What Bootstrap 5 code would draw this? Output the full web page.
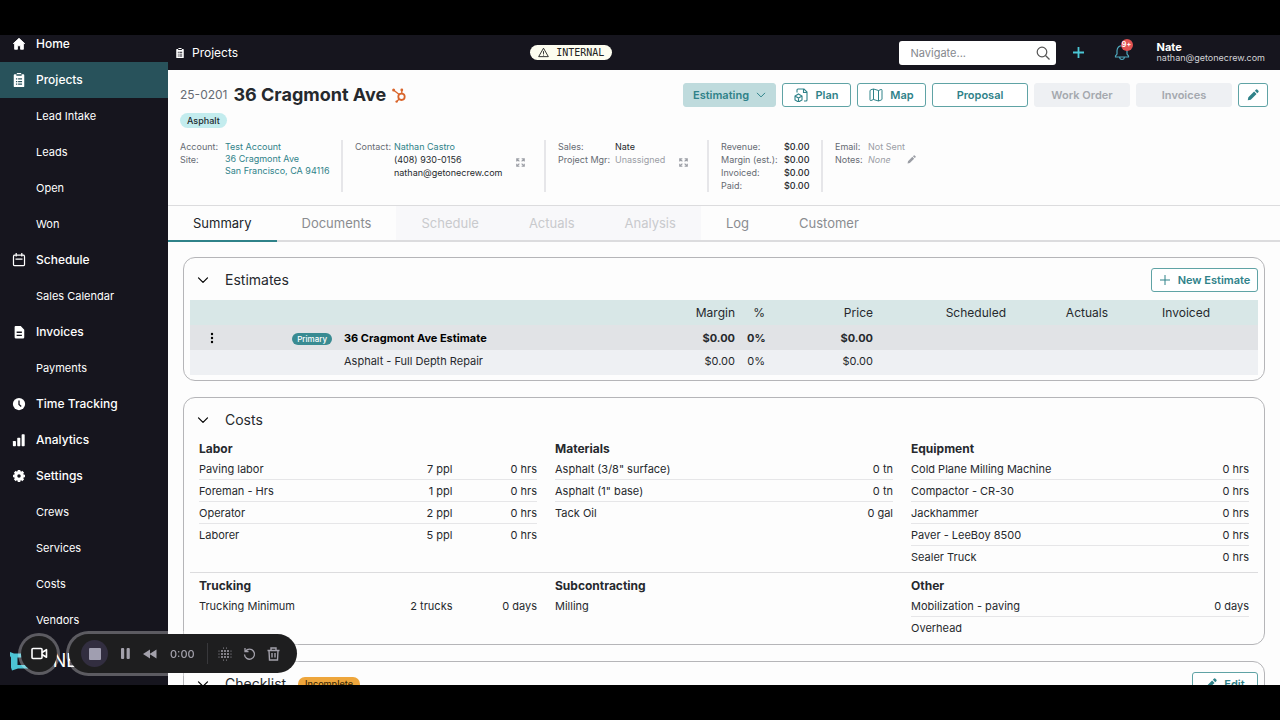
<!DOCTYPE html>
<html lang="en">
<head>
<meta charset="utf-8">
<meta name="viewport" content="width=device-width, initial-scale=1">
<title>36 Cragmont Ave - Projects</title>
<link href="https://cdn.jsdelivr.net/npm/bootstrap@5.3.0/dist/css/bootstrap.min.css" rel="stylesheet">
<style>
:root{--teal:#2f8289;--ink:#16151e}
body{background:#000;color:#26292d;font:11px/14px Inter,"Liberation Sans",sans-serif;padding:35px 0}
svg{display:block;flex:none}
a{text-decoration:none;color:var(--teal)}
button{font-family:inherit}
.app-shell{height:calc(100vh - 70px)}
.side-nav{width:168px;background:var(--ink)}
.side-nav ul{margin-top:-9px}
.side-link{height:36px;color:#fff;font-size:12px;font-weight:500;padding:0 0 1px 12px;gap:10px}
.side-link svg{width:14px;height:14px}
.side-link.sub{font-size:11px;font-weight:400;padding-left:36px}
.side-link.active{background:#28525b}
.brand-logo{left:8px;bottom:12px;gap:11px;color:#fff;font-size:18px;line-height:24px}
.main-pane{background:#fdfdfd}
.top-bar{height:35px;background:var(--ink);color:#fff;padding:0 15px 0 7px}
.crumb{font-size:12px;gap:7px;width:69px}
.env-tag{background:#fdfdf0;color:#222;font:10px/15px "DejaVu Sans Mono",monospace;gap:7px;padding:0 8px}
.search-box{width:157px;height:24px}
.search-box input{font-size:11px;height:24px;padding:0 28px 0 12px;border-radius:3px}
.search-box input::placeholder{color:#85888e}
.search-box svg{right:6px;top:5px}
.bell{margin:0 27px 0 29px}
.bell-count{left:7px;top:-5px;width:12px;height:12px;background:#e05252;font-size:7px;line-height:12px}
.user-name{line-height:11px}
.user-mail{font-size:9px;line-height:10px;color:#d2d2d6}
.proj-head{padding:13px 12px 13px}
.proj-no{font-size:12px;color:#666b73}
.proj-title{font-size:18px;line-height:24px;font-weight:700}
.name-row,.act-row{gap:6px}
.act{height:24px;font-size:11px;line-height:14px;font-weight:600;border:1px solid #5fa3a5;border-radius:3px;color:var(--teal);background:#fff;padding:0;gap:7px}
.act.w{width:96px}
.act.icon-act{width:69px}
.act.state{width:93px;background:#bfdbdd;border-color:#bfdbdd}
.act:disabled{background:#eef0f3;border-color:#eef0f3;color:#a4a8ae}
.act.sq{width:30px}
.act.add-act{width:107px}
.act.edit-act{width:66px}
.tag-row{margin-top:6px}
.tag-pill{background:#c3ecee;color:#1d2a2e;font-size:9px;line-height:15px;font-weight:500;padding:0 7px}
.facts{display:grid;grid-template-columns:163px 203px 163px 114px 1fr;margin-top:12px;font-size:9px;line-height:13px}
.facts>div{min-height:52px;padding-left:12px}
.facts>div:first-child{padding-left:0}
.facts>div:not(:last-child){border-right:2px solid #e6e6e9}
.facts>.with-grow{padding-right:19px}
.facts dl{display:grid;margin:0;align-content:start;grid-template-columns:45px 1fr}
.facts dl.k-contact{grid-template-columns:39px 1fr}
.facts dl.k-sales{grid-template-columns:57px 1fr}
.facts dl.k-money{grid-template-columns:63px 1fr}
.facts dl.k-notes{grid-template-columns:33px 1fr}
.facts dt{font-weight:400;color:#666b73}
.facts dd{margin:0}
.k-money dd{font-weight:500}
.facts address{line-height:12px;margin:0}
.facts .soft,.soft{color:#9b9ea5}
.tab-row{border-top:1px solid #dcdcde;border-bottom:2px solid #dcdcde}
.tab-row button{border:0;background:none;height:34px;padding:0 25px;font-size:13px;color:#8a8c90;position:relative}
.tab-row button.active{color:#212529}
.tab-row button.active::after{content:"";position:absolute;left:0;right:0;bottom:-2px;height:2px;background:var(--teal)}
.tab-row button:disabled{background:#f8f8fa;color:#c9cacd}
.panels{padding:15px 15px 0;gap:16px}
.panel-box{border:1px solid #b5b5b8;border-radius:12px;padding:0 6px 5px;background:#fdfdfd;flex:none}
.panel-head{height:42px;padding-top:2px;gap:12px}
.panel-head h2{font-size:14px;line-height:20px;margin:0;font-weight:400}
.fold{border:0;background:none;padding:0 4px 0 7px}
.est{width:100%;table-layout:fixed;border-collapse:collapse}
.est th,.est td{height:25px;padding:0 6px;text-align:right;white-space:nowrap}
.est th{font-size:12px;font-weight:400}
.est .l{text-align:left}
.est thead tr{background:#d8e7e7}
.est .main-row{background:#e1e3e6;font-weight:700}
.est .line-row{background:#eef0f3}
.est .line-row td{padding-bottom:3px}
.est .c-menu{width:44px}.est .c-tag{width:104px}.est .c-margin{width:98px}.est .c-pct{width:30px}.est .c-price{width:108px}.est .c-sched{width:133px}.est .c-act{width:102px}.est .c-end{width:42px}
.prim{background:#398b92;color:#fff;font-size:8px;line-height:12px;font-weight:500;padding:0 5px;display:inline-block;vertical-align:middle}
.cost-grid{display:grid;grid-template-columns:repeat(3,1fr)}
.cost-grid+.cost-grid{border-top:1px solid #dcdcde;padding-top:4px;margin-top:4px}
.cost-grid section{padding:0 9px}
.cost-grid h3{font-size:12px;line-height:18px;margin:0;font-weight:700}
.cost-grid table{width:100%;table-layout:fixed;border-collapse:separate;border-spacing:0}
.cost-grid td{height:22px;padding:0;text-align:right}
.cost-grid td:first-child{text-align:left;width:50%}
.cost-grid tr:not(:last-child) td{border-bottom:1px solid #e6e6e8}
.warn-pill{background:#eea63c;color:#3a2a08;font-size:9px;line-height:14px;font-weight:500;padding:0 7px}
.rec-bar{left:21px;bottom:47px;gap:12px;color:#a3a1ab}
.rec-cam,.rec-tools{background:#1e1e1f;box-shadow:0 0 0 3px rgba(255,255,255,.3);border:0}
.rec-cam{width:36px;height:36px}
.rec-tools{height:39px;padding:0 17px 0 12px}
.rec-tools button{border:0;background:none;padding:0;color:inherit}
.rec-tools .rec-stop{width:27px;height:27px;background:#322e40}
.rec-main{gap:13px}
.rec-more{gap:11px;margin-left:12px;padding-left:10px;border-left:1px solid #38383b;height:21px}
.rec-time{font-size:11px;font-weight:500}
</style>
</head>
<body>
<svg width="0" height="0" class="position-absolute" aria-hidden="true">
<symbol id="clip" viewBox="0 0 16 16"><path fill="currentColor" fill-rule="evenodd" d="M5.500 0h5v1.500H13q1 0 1 1V15q0 1-1 1H3q-1 0-1-1V2.500q0-1 1-1h2.500zM5 3h6V1.500H5zM4.500 6v1.500H6V6zM7 6v1.500h4.500V6zM4.500 9v1.500H6V9zM7 9v1.500h4.500V9zM4.500 12v1.500H6V12zM7 12v1.500h4.500V12z"/></symbol>
<symbol id="pen" viewBox="0 0 16 16"><path fill="currentColor" d="M1 15l.8-4L9.500 3.300l3.200 3.200L5 14.200zM10.500 2.300l1.600-1.600q.8-.6 1.500 0l1.700 1.700q.6.700 0 1.500l-1.600 1.600z"/></symbol>
<symbol id="chev" viewBox="0 0 12 12"><path fill="none" stroke="currentColor" stroke-width="1.200" stroke-linecap="round" stroke-linejoin="round" d="M1.500 3.800L6 8.300l4.500-4.500"/></symbol>
<symbol id="grow" viewBox="0 0 12 12"><path fill="none" stroke="currentColor" stroke-width="1.500" d="M1 4.500V1h3.500M1 1l3.500 3.500M7.500 1H11v3.500M11 1L7.500 4.500M1 7.500V11h3.500M1 11l3.500-3.500M7.500 11H11V7.500M11 11L7.500 7.500"/></symbol>
</svg>
<div class="app-shell d-flex overflow-hidden position-relative">
<nav class="side-nav flex-shrink-0 position-relative overflow-hidden" aria-label="Main">
<ul class="list-unstyled mb-0">
<li><a href="#" class="side-link d-flex align-items-center"><svg viewBox="0 0 16 16"><path fill="currentColor" stroke="currentColor" stroke-linejoin="round" d="M8 1.500l6.500 6H13v6.500H9.800V10H6.200v4H3V7.500H1.500z"/></svg>Home</a></li>
<li><a href="#" class="side-link active d-flex align-items-center"><svg viewBox="0 0 16 16"><use href="#clip"/></svg>Projects</a></li>
<li><a href="#" class="side-link sub d-flex align-items-center">Lead Intake</a></li>
<li><a href="#" class="side-link sub d-flex align-items-center">Leads</a></li>
<li><a href="#" class="side-link sub d-flex align-items-center">Open</a></li>
<li><a href="#" class="side-link sub d-flex align-items-center">Won</a></li>
<li><a href="#" class="side-link d-flex align-items-center"><svg viewBox="0 0 16 16" fill="none" stroke="currentColor" stroke-width="1.400"><rect x="1.700" y="2.500" width="12.600" height="12" rx="1.500"/><path d="M4.800 0v4M11.200 0v4M4 7h8"/></svg>Schedule</a></li>
<li><a href="#" class="side-link sub d-flex align-items-center">Sales Calendar</a></li>
<li><a href="#" class="side-link d-flex align-items-center"><svg viewBox="0 0 16 16"><path fill="currentColor" fill-rule="evenodd" d="M4 1h6l4 4.500V14q0 1.500-1.500 1.500h-8Q3 15.500 3 14V2.200Q3 1 4 1zM5.300 7.500V9h6V7.500zM5.300 11v1.500h6V11z"/></svg>Invoices</a></li>
<li><a href="#" class="side-link sub d-flex align-items-center">Payments</a></li>
<li><a href="#" class="side-link d-flex align-items-center"><svg viewBox="0 0 16 16"><circle cx="8" cy="8" r="7" fill="currentColor"/><path d="M8 4v4.500l2.500 2.300" fill="none" stroke="#16151e" stroke-width="1.500"/></svg>Time Tracking</a></li>
<li><a href="#" class="side-link d-flex align-items-center"><svg viewBox="0 0 16 16" fill="currentColor"><rect x="1" y="9" width="3.500" height="6" rx=".8"/><rect x="6" y="5.500" width="3.500" height="9.500" rx=".8"/><rect x="11" y="1.500" width="3.500" height="13.500" rx=".8"/></svg>Analytics</a></li>
<li><a href="#" class="side-link d-flex align-items-center"><svg viewBox="0 0 16 16"><circle cx="8" cy="8" r="3.800" fill="none" stroke="currentColor" stroke-width="3.600"/><path stroke="currentColor" stroke-width="3" d="M8 1.200v2M8 12.800v2M1.200 8h2M12.800 8h2M3.200 3.200l1.400 1.400M11.400 11.400l1.400 1.400M3.200 12.800l1.400-1.400M11.400 4.600l1.400-1.400"/></svg>Settings</a></li>
<li><a href="#" class="side-link sub d-flex align-items-center">Crews</a></li>
<li><a href="#" class="side-link sub d-flex align-items-center">Services</a></li>
<li><a href="#" class="side-link sub d-flex align-items-center">Costs</a></li>
<li><a href="#" class="side-link sub d-flex align-items-center">Vendors</a></li>
</ul>
<div class="brand-logo position-absolute d-flex align-items-center"><svg width="20" height="20" viewBox="0 0 20 20"><path fill="#4cc4d4" d="M2 1l4 1.500h14v15H10l-6 2-1-3V6.500L2 5z"/><path fill="#16151e" d="M9.500 6.500H20V14H9.500z"/></svg><span>ONE</span></div>
</nav>
<div class="main-pane flex-grow-1 d-flex flex-column overflow-hidden">
<header class="top-bar d-flex align-items-center justify-content-between flex-shrink-0">
<div class="crumb d-flex align-items-center"><svg width="10" height="10"><use href="#clip"/></svg>Projects</div>
<span class="env-tag rounded-pill d-flex align-items-center"><svg width="11" height="11" viewBox="0 0 12 12" fill="none" stroke="currentColor" stroke-linejoin="round"><path d="M6 1.300L11.300 10.500H.7zM6 4.500v3M6 8.300v1"/></svg>INTERNAL</span>
<div class="d-flex align-items-center">
<div class="search-box position-relative"><input class="form-control border-0" type="text" placeholder="Navigate..." aria-label="Navigate"><svg class="position-absolute" width="14" height="14" viewBox="0 0 14 14" fill="none" stroke="#555" stroke-width="1.200"><circle cx="6" cy="6" r="4.800"/><path d="M9.500 9.500l4 4"/></svg></div>
<button class="btn p-0 border-0 ms-3" aria-label="Add"><svg width="13" height="13" viewBox="0 0 13 13"><path d="M6.500 1v11M1 6.500h11" stroke="#4bc6d4" stroke-width="1.800"/></svg></button>
<button class="btn bell p-0 border-0 position-relative" aria-label="Notifications"><svg width="16" height="17" viewBox="0 0 16 17" fill="none" stroke="#4fa9be" stroke-width="1.200"><path d="M1.500 13V12l1.500-2V6.500Q3.500 2 8 1.700q4.500.3 5 4.800V10l1.500 2v1zM5.500 13q.3 2.500 2.500 2.500t2.500-2.500"/></svg><span class="bell-count position-absolute rounded-circle text-white fw-bold">9+</span></button>
<div><div class="user-name fw-bold">Nate</div><div class="user-mail">nathan@getonecrew.com</div></div>
</div>
</header>
<div class="proj-head flex-shrink-0">
<div class="d-flex align-items-center justify-content-between">
<div class="name-row d-flex align-items-center"><span class="proj-no">25-0201</span><h1 class="proj-title m-0">36 Cragmont Ave</h1><svg width="15" height="15" viewBox="0 0 15 15" fill="none" stroke="#d9652b"><circle cx="9.500" cy="8.800" r="3.200" stroke-width="1.800"/><path stroke-width="1.300" d="M9.800 5.500V2.500M7.200 6.500L1.800 2.200M7.200 11l-2.500 2.500"/><g fill="#d9652b" stroke="none"><circle cx="9.800" cy="2" r="1.400"/><circle cx="1.600" cy="1.900" r="1.500"/><circle cx="4.600" cy="13.600" r="1.200"/></g></svg></div>
<div class="act-row d-flex">
<button class="act state d-flex align-items-center justify-content-center">Estimating <svg width="10" height="10"><use href="#chev"/></svg></button>
<button class="act icon-act d-flex align-items-center justify-content-center"><svg width="14" height="14" viewBox="0 0 14 14" fill="none" stroke="currentColor" stroke-width="1.100"><path d="M3 4.500V2q0-1 1-1h6l3 3v8q0 1-1 1h-2M9.500 1v3.500H13"/><path d="M4.500 6l3.500 2v4l-3.500 2L1 12V8zM1 8l3.500 2L8 8M4.500 10v4"/></svg>Plan</button>
<button class="act icon-act d-flex align-items-center justify-content-center"><svg width="14" height="14" viewBox="0 0 14 14" fill="none" stroke="currentColor"><path d="M1 3q0-1 1-1.300L4.500 1l5 1.500L12 1.500q1-.2 1 .8V11q0 .8-.8 1l-2.700 1-5-1.500L2 12.500q-1 .2-1-.8zM4.500 1v10.500M9.500 2.500V13"/></svg>Map</button>
<button class="act w">Proposal</button>
<button class="act w" disabled>Work Order</button>
<button class="act w" disabled>Invoices</button>
<button class="act sq d-flex align-items-center justify-content-center" aria-label="Edit project"><svg width="12" height="12"><use href="#pen"/></svg></button>
</div></div>
<div class="tag-row d-flex"><span class="tag-pill rounded-pill">Asphalt</span></div>
<div class="facts">
<div><dl><dt>Account:</dt><dd><a href="#">Test Account</a></dd><dt>Site:</dt><dd><a href="#"><address>36 Cragmont Ave<br>San Francisco, CA 94116</address></a></dd></dl></div>
<div class="with-grow d-flex align-items-center justify-content-between pb-2"><dl class="k-contact align-self-start"><dt>Contact:</dt><dd><a href="#">Nathan Castro</a><br>(408) 930-0156<br>nathan@getonecrew.com</dd></dl><svg class="soft" width="9" height="9"><use href="#grow"/></svg></div>
<div class="with-grow d-flex align-items-center justify-content-between pb-2"><dl class="k-sales align-self-start"><dt>Sales:</dt><dd>Nate</dd><dt>Project Mgr:</dt><dd class="soft">Unassigned</dd></dl><svg class="soft" width="9" height="9"><use href="#grow"/></svg></div>
<div><dl class="k-money"><dt>Revenue:</dt><dd>$0.00</dd><dt>Margin (est.):</dt><dd>$0.00</dd><dt>Invoiced:</dt><dd>$0.00</dd><dt>Paid:</dt><dd>$0.00</dd></dl></div>
<div><dl class="k-notes"><dt>Email:</dt><dd class="soft">Not Sent</dd><dt>Notes:</dt><dd class="soft d-flex align-items-center"><i>None</i><svg class="ms-3" width="9" height="9"><use href="#pen"/></svg></dd></dl></div>
</div>
</div>
<div class="tab-row d-flex flex-shrink-0" role="tablist">
<button role="tab" class="active">Summary</button><button role="tab">Documents</button><button role="tab" disabled>Schedule</button><button role="tab" disabled>Actuals</button><button role="tab" disabled>Analysis</button><button role="tab">Log</button><button role="tab">Customer</button>
</div>
<main class="panels d-flex flex-column overflow-hidden flex-grow-1">
<section class="panel-box">
<div class="panel-head d-flex align-items-center"><button class="fold" aria-label="Collapse estimates"><svg width="12" height="12"><use href="#chev"/></svg></button><h2>Estimates</h2><button class="act add-act ms-auto d-flex align-items-center justify-content-center"><svg width="12" height="12" viewBox="0 0 12 12"><path d="M6 1v10M1 6h10" stroke="currentColor"/></svg>New Estimate</button></div>
<table class="est">
<colgroup><col class="c-menu"><col class="c-tag"><col><col class="c-margin"><col class="c-pct"><col class="c-price"><col class="c-sched"><col class="c-act"><col class="c-act"><col class="c-end"></colgroup>
<thead><tr><th></th><th></th><th></th><th>Margin</th><th>%</th><th>Price</th><th>Scheduled</th><th>Actuals</th><th>Invoiced</th><th></th></tr></thead>
<tbody>
<tr class="main-row"><td><button class="fold d-block p-0 mx-auto" aria-label="Estimate menu"><svg width="4" height="12" viewBox="0 0 4 12"><circle cx="2" cy="2" r="1.200"/><circle cx="2" cy="6" r="1.200"/><circle cx="2" cy="10" r="1.200"/></svg></button></td><td><span class="prim rounded-pill">Primary</span></td><td class="l text-black">36 Cragmont Ave Estimate</td><td>$0.00</td><td>0%</td><td>$0.00</td><td></td><td></td><td></td><td></td></tr>
<tr class="line-row"><td></td><td></td><td class="l">Asphalt - Full Depth Repair</td><td>$0.00</td><td>0%</td><td>$0.00</td><td></td><td></td><td></td><td></td></tr>
</tbody></table>
</section>
<section class="panel-box">
<div class="panel-head d-flex align-items-center"><button class="fold" aria-label="Collapse costs"><svg width="12" height="12"><use href="#chev"/></svg></button><h2>Costs</h2></div>
<div class="cost-grid">
<section><h3>Labor</h3><table><tr><td>Paving labor</td><td>7 ppl</td><td>0 hrs</td></tr><tr><td>Foreman - Hrs</td><td>1 ppl</td><td>0 hrs</td></tr><tr><td>Operator</td><td>2 ppl</td><td>0 hrs</td></tr><tr><td>Laborer</td><td>5 ppl</td><td>0 hrs</td></tr></table></section>
<section><h3>Materials</h3><table><tr><td>Asphalt (3/8" surface)</td><td>0 tn</td></tr><tr><td>Asphalt (1" base)</td><td>0 tn</td></tr><tr><td>Tack Oil</td><td>0 gal</td></tr></table></section>
<section><h3>Equipment</h3><table><tr><td>Cold Plane Milling Machine</td><td>0 hrs</td></tr><tr><td>Compactor - CR-30</td><td>0 hrs</td></tr><tr><td>Jackhammer</td><td>0 hrs</td></tr><tr><td>Paver - LeeBoy 8500</td><td>0 hrs</td></tr><tr><td>Sealer Truck</td><td>0 hrs</td></tr></table></section>
</div>
<div class="cost-grid">
<section><h3>Trucking</h3><table><tr><td>Trucking Minimum</td><td>2 trucks</td><td>0 days</td></tr></table></section>
<section><h3>Subcontracting</h3><table><tr><td>Milling</td><td></td></tr></table></section>
<section><h3>Other</h3><table><tr><td>Mobilization - paving</td><td>0 days</td></tr><tr><td>Overhead</td><td></td></tr></table></section>
</div>
</section>
<section class="panel-box">
<div class="panel-head d-flex align-items-center"><button class="fold" aria-label="Collapse checklist"><svg width="12" height="12"><use href="#chev"/></svg></button><h2>Checklist</h2><span class="warn-pill rounded-pill">Incomplete</span><button class="act edit-act ms-auto d-flex align-items-center justify-content-center"><svg width="12" height="12"><use href="#pen"/></svg>Edit</button></div>
</section>
</main>
</div>
</div>
<div class="rec-bar position-fixed d-flex align-items-center">
<button class="rec-cam rounded-circle d-flex align-items-center justify-content-center p-0" aria-label="Camera"><svg width="17" height="13" viewBox="0 0 17 13" fill="none" stroke="#fff" stroke-width="1.600" stroke-linejoin="round"><rect x="1" y="1.500" width="10" height="10" rx="1"/><path d="M11 5.500l4.500-2.800v7.600L11 7.500"/></svg></button>
<div class="rec-tools rounded-pill d-flex align-items-center">
<div class="rec-main d-flex align-items-center">
<button class="rec-stop rounded-circle d-flex align-items-center justify-content-center" aria-label="Stop"><svg width="12" height="12"><rect width="12" height="12" rx="1" fill="#a09eb0"/></svg></button>
<button aria-label="Pause"><svg width="9" height="11" viewBox="0 0 9 11" fill="currentColor"><rect width="3.200" height="11" rx="1"/><rect x="5.600" width="3.200" height="11" rx="1"/></svg></button>
<button aria-label="Rewind"><svg width="14" height="10" viewBox="0 0 14 10" fill="currentColor"><path d="M7 .5v9L0 5zM13.500.5v9L6.500 5z"/></svg></button>
<span class="rec-time">0:00</span>
</div>
<div class="rec-more d-flex align-items-center">
<button aria-label="Blur"><svg width="14" height="14" viewBox="0 0 14 14" stroke="currentColor" stroke-linecap="round"><path stroke-width="2" stroke-dasharray="0 3" d="M4 4h7M4 7h7M4 10h7"/><path stroke-width="1.200" stroke-dasharray="0 3" d="M5.500 1h4M5.500 13h4M1 4v7M13 4v7"/></svg></button>
<button aria-label="Restart"><svg width="13" height="14" viewBox="0 0 13 14" fill="none" stroke="currentColor" stroke-width="1.300"><path d="M2.500 4.200A5 5 0 1 1 1.500 7.500M2 1v3.500h3.500"/></svg></button>
<button aria-label="Delete"><svg width="13" height="14" viewBox="0 0 13 14" fill="none" stroke="currentColor" stroke-width="1.400"><path d="M.5 3.500h12M4 3.500V1h5v2.500M2 3.500l.5 9.500h8l.5-9.500M5 6v4.500M8 6v4.500"/></svg></button>
</div>
</div>
</div>
<script src="https://cdn.jsdelivr.net/npm/bootstrap@5.3.0/dist/js/bootstrap.bundle.min.js"></script>
</body>
</html>
